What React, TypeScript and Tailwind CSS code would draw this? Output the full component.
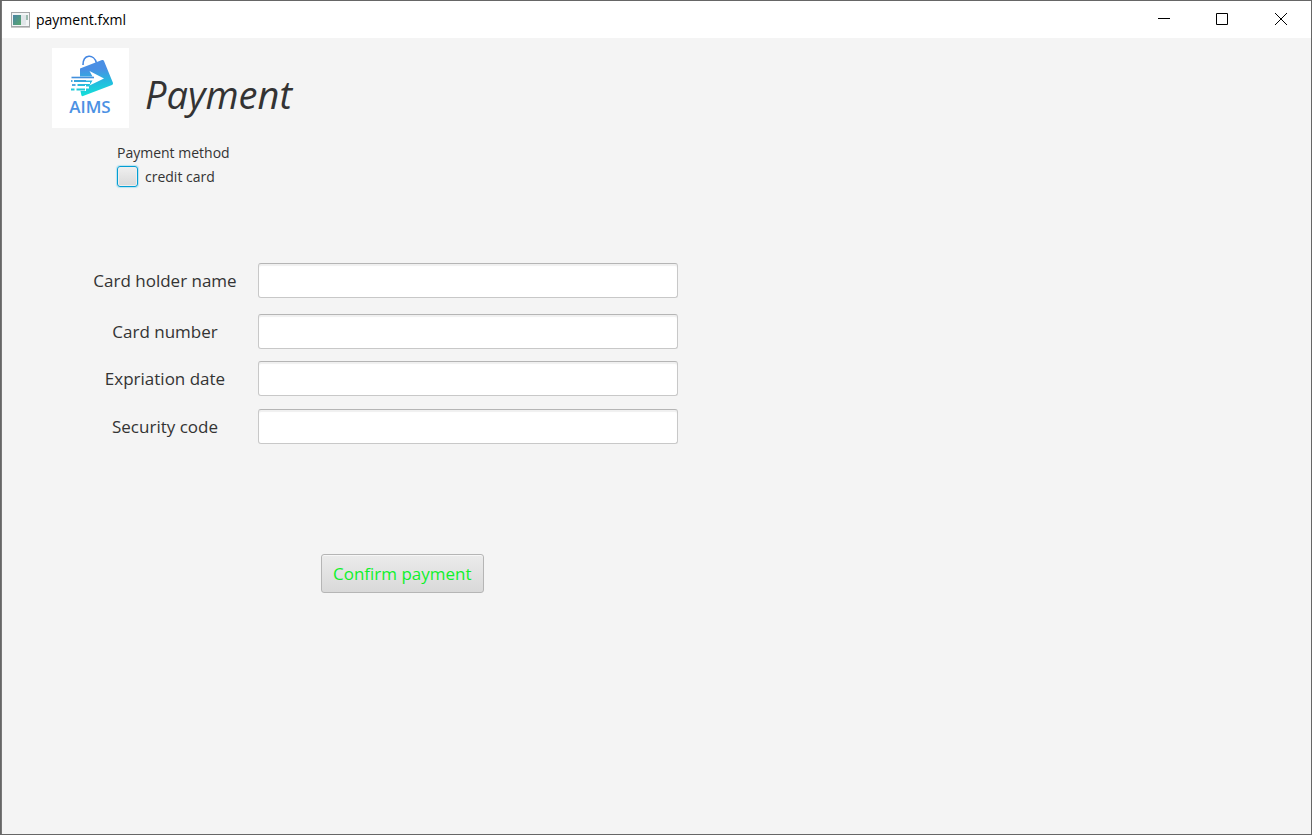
import React from "react";

const fields = [
  { id: "holder", label: "Card holder name", gap: "" },
  { id: "number", label: "Card number", gap: "mt-4" },
  { id: "expiry", label: "Expriation date", gap: "mt-3" },
  { id: "code", label: "Security code", gap: "mt-[13px]" },
];

function AppIcon() {
  return (
    <svg width="19" height="16" viewBox="0 0 19 16" aria-hidden="true">
      <defs>
        <linearGradient id="pane" x1="0" y1="0" x2="1" y2="1">
          <stop offset="0" stopColor="#4b84a6" />
          <stop offset="1" stopColor="#58a86c" />
        </linearGradient>
      </defs>
      <rect x="0.5" y="0.5" width="18" height="14" fill="#f3f5f6" stroke="#a5a7a9" />
      <path d="M0 15.5h19" stroke="#c9c9c9" />
      <rect x="2" y="3" width="8" height="10" fill="url(#pane)" />
      <rect x="10" y="3" width="5" height="10" fill="#e1e6e9" />
      <path d="M16 3v5" stroke="#7fa697" strokeWidth="1.5" />
    </svg>
  );
}

function Logo() {
  return (
    <svg width="77" height="80" viewBox="0 0 77 80" role="img" aria-label="AIMS">
      <defs>
        <linearGradient id="bag" x1="0.45" y1="0" x2="0.5" y2="1">
          <stop offset="0.25" stopColor="#4a8fe4" />
          <stop offset="0.6" stopColor="#25b9df" />
          <stop offset="1" stopColor="#12e2d8" />
        </linearGradient>
      </defs>
      <rect width="77" height="80" fill="#fff" />
      <path d="M31 17C31 6 42 5.500 44.500 15" fill="none" stroke="#4386e2" strokeWidth="1.600" />
      <path
        d="M28 20.500L50 12Q51.500 11.500 52 13L61 35Q61.300 36.500 60 37L31 48Q29.500 48.500 29.300 47L28.500 43H34V37H28Z"
        fill="url(#bag)"
      />
      <path d="M37.500 23L52 30.500L37.500 37.500L40.500 32.500H28V28.500H40.500Z" fill="#fff" />
      <path d="M28 34H38V36H28ZM28 38.500H37V40.500H28Z" fill="#fff" />
      <g fill="none" strokeWidth="2">
        <path d="M19.500 29.500H42" stroke="#438fdc" strokeWidth="1.600" />
        <path d="M22 33H34" stroke="#36a6dd" />
        <path d="M25.500 37H33" stroke="#2cbadb" />
        <path d="M19 41.500H22.500M24.500 41.500H33" stroke="#22cbd9" />
        <path d="M19 33H20.500M20 37H23.500" stroke="#55a9df" />
      </g>
      <text x="38" y="65" textAnchor="middle" fontFamily="Open Sans, Noto Sans, sans-serif" fontSize="17" fontWeight="600" fill="#4c91e3">
        AIMS
      </text>
    </svg>
  );
}

export default function App() {
  return (
    <div className="flex min-h-screen flex-col border border-[#666] bg-[#f4f4f4] font-['Open_Sans','Noto_Sans',sans-serif] text-[#333] shadow-[inset_1px_0_0_#777]">
      <header className="ml-px flex h-[37px] items-center bg-white">
        <div className="flex flex-1 items-center gap-1.5 pl-[9px] text-sm text-black">
          <AppIcon />
          <span>payment.fxml</span>
        </div>
        <div className="flex h-full pb-px text-black">
          <button type="button" aria-label="Minimize" className="flex w-[58px] items-center justify-center">
            <svg width="12" height="12" viewBox="0 0 12 12" stroke="currentColor"><path d="M0 5.500H12" /></svg>
          </button>
          <button type="button" aria-label="Maximize" className="flex w-[58px] items-center justify-center">
            <svg width="12" height="12" viewBox="0 0 12 12" fill="none" stroke="currentColor"><path d="M.5 .5H11.500V11.500H.5Z" /></svg>
          </button>
          <button type="button" aria-label="Close" className="flex w-[60px] items-center justify-center">
            <svg width="12" height="12" viewBox="0 0 12 12" stroke="currentColor"><path d="M0 0L12 12M12 0L0 12" /></svg>
          </button>
        </div>
      </header>

      <main className="flex flex-1 flex-col items-start pt-2.5">
        <div className="ml-[51px] flex h-20 items-center gap-4">
          <Logo />
          <h1 className="pt-3 font-['Segoe_Script','Open_Sans',cursive] text-[38px] leading-[60px] font-medium italic">Payment</h1>
        </div>

        <form className="flex flex-col items-start" onSubmit={(e) => e.preventDefault()}>
          <fieldset className="mt-3.5 ml-[116px] text-sm">
            <legend className="leading-[22px]">Payment method</legend>
            <label className="flex h-[25px] items-center gap-[7px]">
              <input
                type="checkbox"
                className="size-[21px] appearance-none rounded-[3px] border border-[#039ed3] bg-linear-to-b from-[#efefef] to-[#d9d9d9] shadow-[0_0_1px_1px_#b9e3f1,inset_0_0_0_1px_#eee] checked:bg-[#039ed3]"
              />
              credit card
            </label>
          </fieldset>

          <div className="mt-[74px] ml-[88px]">
            {fields.map((f) => (
              <div key={f.id} className={`flex items-center gap-[17px] ${f.gap}`}>
                <label htmlFor={f.id} className="w-[152px] text-center text-[17px] leading-6">
                  {f.label}
                </label>
                <input
                  id={f.id}
                  type="text"
                  className="h-[35px] w-[420px] rounded-[3px] border border-[#c8c8c8] border-t-[#b5b5b5] bg-white px-2.5 text-[17px] shadow-[inset_0_2px_1px_#f0f0f0] outline-none focus:border-[#039ed3]"
                />
              </div>
            ))}
          </div>

          <button
            type="submit"
            className="mt-[110px] ml-[320px] h-[39px] rounded-[3px] border border-[#b5b5b5] bg-linear-to-b from-[#ebebeb] to-[#d9d9d9] px-[11px] text-[17px] leading-6 text-[#10f02c] shadow-[inset_0_1px_0_#f7f7f7]"
          >
            Confirm payment
          </button>
        </form>
      </main>
    </div>
  );
}
